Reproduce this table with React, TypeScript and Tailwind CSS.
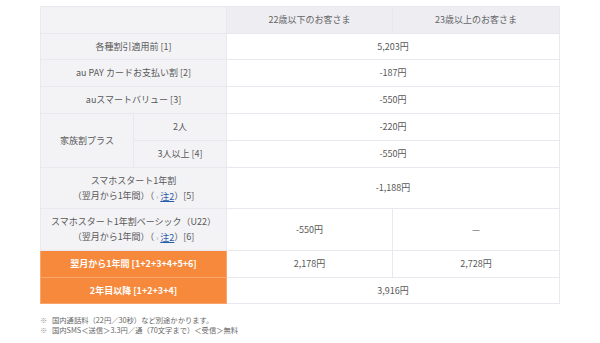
import React from "react";

const font = { fontFamily: '"Noto Sans CJK JP", "Noto Sans", sans-serif' };

const Note: React.FC<{ n: number }> = ({ n }) => (
  <>
    （
    <span className="inline-flex items-center">
      <span className="mx-[2px] inline-block text-[7px] text-[#999]">›</span>
      <span className="text-[#2a5caa] underline">注2</span>
    </span>
    ）[{n}]
  </>
);

const label = "bg-[#f3f3f6] border border-[#e8e8ee] text-center";
const cell = "bg-white border border-[#e8e8ee] text-center";
const orange = "bg-[#f6893b] border border-[#f8a66c] text-center text-white font-bold";

export default function App() {
  return (
    <div className="w-[600px] h-[343px] bg-white text-[#595959] text-[9px]" style={font}>
      <div className="pl-[40px] pt-[6px] w-[559px]">
        <table className="w-[519px] border-collapse table-fixed">
          <colgroup>
            <col className="w-[93px]" />
            <col className="w-[93px]" />
            <col className="w-[166px]" />
            <col className="w-[167px]" />
          </colgroup>
          <tbody>
            <tr className="h-[27px]">
              <td colSpan={2} className={label}></td>
              <td className="bg-[#ededf2] border border-[#e8e8ee] text-center text-[#666]">22歳以下のお客さま</td>
              <td className="bg-[#ededf2] border border-[#e8e8ee] text-center text-[#666]">23歳以上のお客さま</td>
            </tr>
            <tr className="h-[26px]">
              <td colSpan={2} className={label}>各種割引適用前 [1]</td>
              <td colSpan={2} className={cell}>5,203円</td>
            </tr>
            <tr className="h-[27px]">
              <td colSpan={2} className={label}>au PAY カードお支払い割 [2]</td>
              <td colSpan={2} className={cell}>-187円</td>
            </tr>
            <tr className="h-[27px]">
              <td colSpan={2} className={label}>auスマートバリュー [3]</td>
              <td colSpan={2} className={cell}>-550円</td>
            </tr>
            <tr className="h-[27px]">
              <td rowSpan={2} className={label}>家族割プラス</td>
              <td className={label}>2人</td>
              <td colSpan={2} className={cell}>-220円</td>
            </tr>
            <tr className="h-[27px]">
              <td className={label}>3人以上 [4]</td>
              <td colSpan={2} className={cell}>-550円</td>
            </tr>
            <tr className="h-[41px]">
              <td colSpan={2} className={`${label} leading-[15px]`}>
                スマホスタート1年割
                <br />
                （翌月から1年間）<Note n={5} />
              </td>
              <td colSpan={2} className={cell}>-1,188円</td>
            </tr>
            <tr className="h-[42px]">
              <td colSpan={2} className={`${label} leading-[15px]`}>
                スマホスタート1年割ベーシック（U22）
                <br />
                （翌月から1年間）<Note n={6} />
              </td>
              <td className={cell}>-550円</td>
              <td className={cell}>—</td>
            </tr>
            <tr className="h-[27px]">
              <td colSpan={2} className={orange}>翌月から1年間 [1+2+3+4+5+6]</td>
              <td className={cell}>2,178円</td>
              <td className={cell}>2,728円</td>
            </tr>
            <tr className="h-[26px]">
              <td colSpan={2} className={orange}>2年目以降 [1+2+3+4]</td>
              <td colSpan={2} className={cell}>3,916円</td>
            </tr>
          </tbody>
        </table>
        <div className="mt-[11px] text-[7.3px] leading-[10px] text-[#666]">
          <div className="flex">
            <span className="w-[12px] text-[#999]">※</span>
            <span>国内通話料（22円／30秒）など別途かかります。</span>
          </div>
          <div className="flex">
            <span className="w-[12px] text-[#999]">※</span>
            <span>国内SMS＜送信＞3.3円／通（70文字まで）＜受信＞無料</span>
          </div>
        </div>
      </div>
    </div>
  );
}
